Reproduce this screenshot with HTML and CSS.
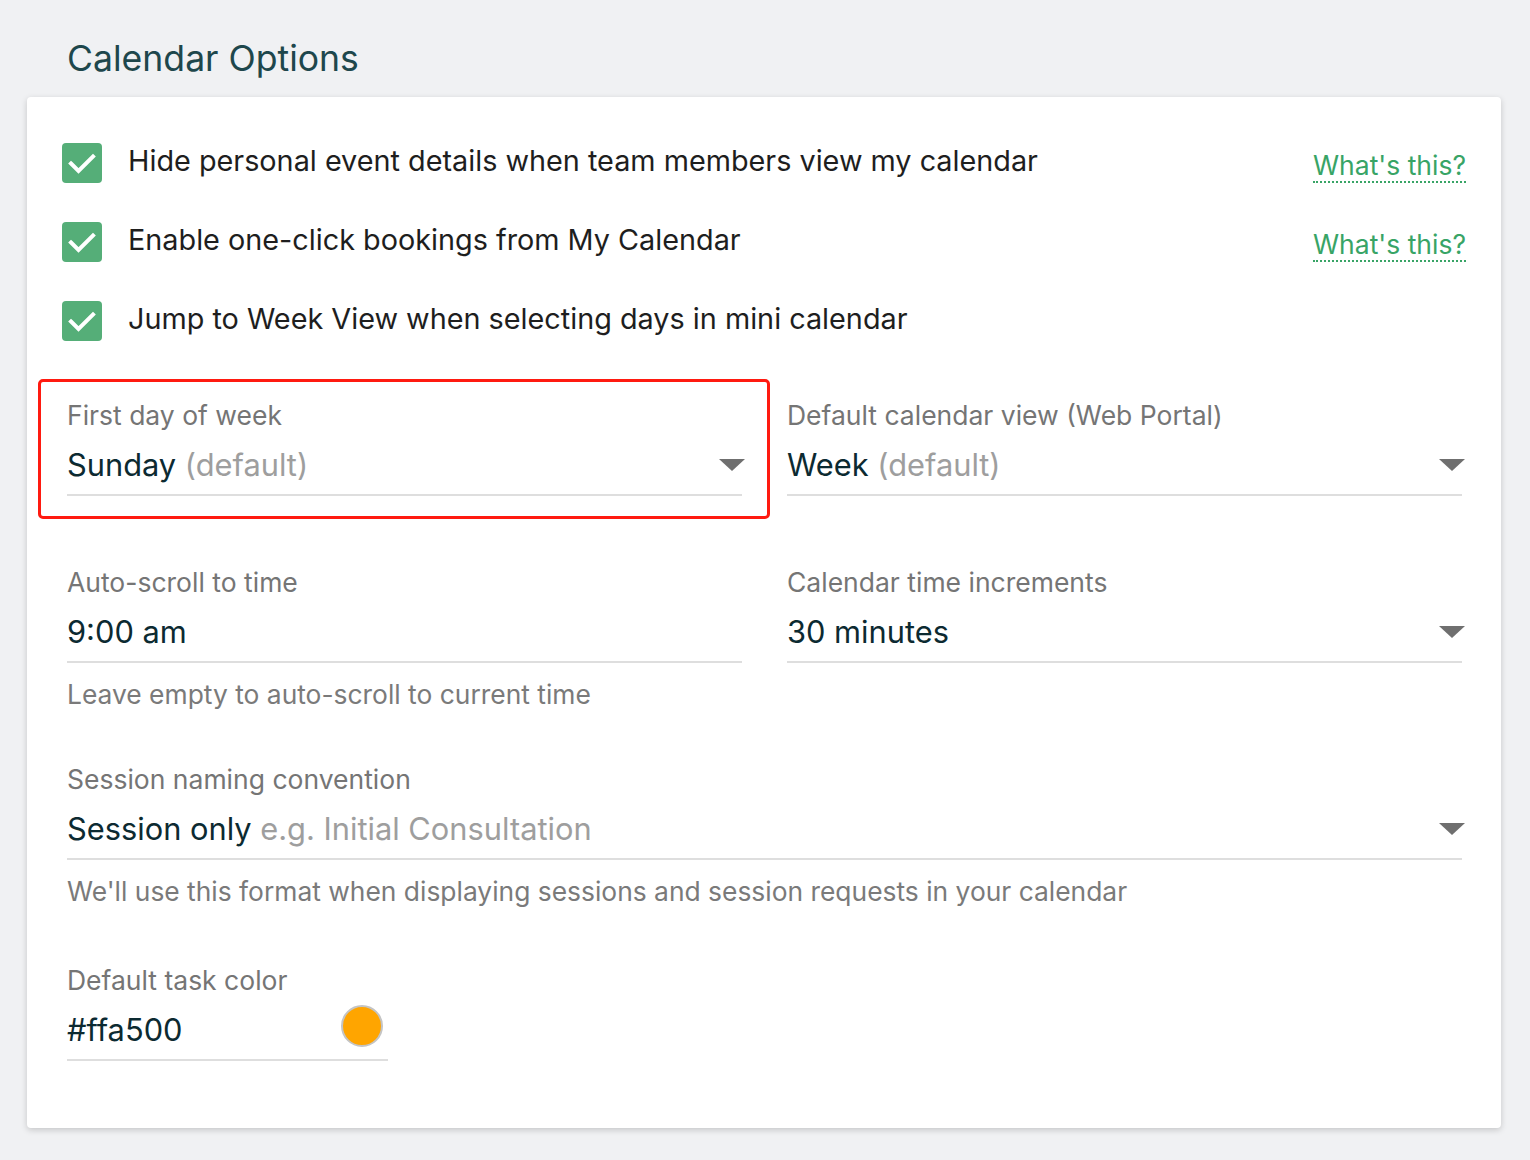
FILE: index.html
```html
<!DOCTYPE html>
<html lang="en">
<head>
    <meta charset="UTF-8">
    <meta name="viewport" content="width=device-width, initial-scale=1.0">
    <title>Calendar Options</title>
    <link rel="stylesheet" href="styles.css">
</head>
<body>
    <h1 class="page-title">Calendar Options</h1>

    <div class="card">
        <div class="check-row">
            <span class="checkbox"><svg viewBox="0 0 40 40"><path d="M9 20.5l7.5 7.5L31 13.5"/></svg></span>
            <span class="check-label">Hide personal event details when team members view my calendar</span>
            <a class="help-link" href="#">What's this?</a>
        </div>
        <div class="check-row">
            <span class="checkbox"><svg viewBox="0 0 40 40"><path d="M9 20.5l7.5 7.5L31 13.5"/></svg></span>
            <span class="check-label">Enable one-click bookings from My Calendar</span>
            <a class="help-link" href="#">What's this?</a>
        </div>
        <div class="check-row">
            <span class="checkbox"><svg viewBox="0 0 40 40"><path d="M9 20.5l7.5 7.5L31 13.5"/></svg></span>
            <span class="check-label">Jump to Week View when selecting days in mini calendar</span>
        </div>

        <div class="field-row first-row">
            <div class="field highlighted">
                <div class="field-label">First day of week</div>
                <div class="field-input">
                    <span class="value">Sunday <span class="muted">(default)</span></span>
                    <span class="caret"></span>
                </div>
            </div>
            <div class="field">
                <div class="field-label">Default calendar view (Web Portal)</div>
                <div class="field-input">
                    <span class="value">Week <span class="muted">(default)</span></span>
                    <span class="caret"></span>
                </div>
            </div>
        </div>

        <div class="field-row">
            <div class="field">
                <div class="field-label">Auto-scroll to time</div>
                <div class="field-input">
                    <span class="value">9:00 am</span>
                </div>
                <div class="field-help">Leave empty to auto-scroll to current time</div>
            </div>
            <div class="field">
                <div class="field-label">Calendar time increments</div>
                <div class="field-input">
                    <span class="value">30 minutes</span>
                    <span class="caret"></span>
                </div>
            </div>
        </div>

        <div class="field-row single">
            <div class="field">
                <div class="field-label">Session naming convention</div>
                <div class="field-input">
                    <span class="value">Session only <span class="muted">e.g. Initial Consultation</span></span>
                    <span class="caret"></span>
                </div>
                <div class="field-help">We'll use this format when displaying sessions and session requests in your calendar</div>
            </div>
        </div>

        <div class="field-row single last-row">
            <div class="field color-field">
                <div class="field-label">Default task color</div>
                <div class="field-input">
                    <span class="value">#ffa500</span>
                    <span class="swatch" style="background-color: #ffa500;"></span>
                </div>
            </div>
        </div>
    </div>
</body>
</html>
```

FILE: styles.css
```css
body {
    margin: 0;
    background-color: #f0f1f3;
    font-family: 'Inter', 'Noto Sans', sans-serif;
    color: #212121;
}
.page-title {
    margin: 0;
    padding: 38px 0 0 67px;
    height: 59px;
    font-size: 35.6px;
    font-weight: 400;
    line-height: 42px;
    color: #1e474c;
}
.card {
    margin: 0 29px 32px 27px;
    padding: 46px 35px 67px 35px;
    background-color: #ffffff;
    border-radius: 4px;
    box-shadow: 0 2px 6px rgba(0, 0, 0, 0.18);
}
.check-row {
    display: flex;
    align-items: center;
    height: 40px;
    margin-bottom: 39px;
}
.check-row:nth-child(3) {
    margin-bottom: 0;
}
.checkbox {
    width: 40px;
    height: 40px;
    flex: none;
    border-radius: 4px;
    background-color: #55ae78;
}
.checkbox svg {
    display: block;
    width: 40px;
    height: 40px;
    fill: none;
    stroke: #ffffff;
    stroke-width: 4;
    stroke-linecap: square;
}
.check-label {
    flex: 1;
    margin-left: 26px;
    margin-top: -4px;
    font-size: 28.8px;
    line-height: 34px;
    color: #1e1e1e;
}
.help-link {
    margin-top: 6px;
    font-size: 26.5px;
    line-height: 32px;
    color: #38a466;
    text-decoration: none;
    border-bottom: 2px dotted #38a466;
}
.field-row {
    display: grid;
    grid-template-columns: 1fr 1fr;
    column-gap: 45px;
    padding: 0 4px 0 5px;
    margin-top: 55px;
}
.field-row.first-row {
    margin-top: 59px;
}
.field-row.first-row + .field-row {
    margin-top: 71px;
}
.field-row.single {
    grid-template-columns: 1fr;
}
.field-row.last-row {
    margin-top: 59px;
}
.field {
    position: relative;
}
.field.highlighted::after {
    content: "";
    position: absolute;
    top: -21px;
    left: -29px;
    right: -28px;
    bottom: -23px;
    border: 3px solid #ff1a10;
    border-radius: 5px;
}
.field-label {
    font-size: 26.5px;
    line-height: 30px;
    color: #757575;
}
.field-input {
    display: flex;
    align-items: center;
    justify-content: space-between;
    padding: 18px 0 12px 0;
    border-bottom: 2px solid #dedede;
}
.value {
    font-size: 30.8px;
    line-height: 34px;
    color: #0c2a31;
}
.muted {
    color: #9e9e9e;
}
.caret {
    width: 0;
    height: 0;
    margin-right: -3px;
    border-left: 13px solid transparent;
    border-right: 13px solid transparent;
    border-top: 12px solid #6f6f6f;
}
.field-help {
    margin-top: 16px;
    font-size: 26.4px;
    line-height: 30px;
    color: #7a7a7a;
}
.color-field {
    width: 321px;
}
.swatch {
    width: 38px;
    height: 38px;
    margin-right: 5px;
    margin-top: -8px;
    border-radius: 50%;
    border: 2px solid #c4c4c4;
}
```
